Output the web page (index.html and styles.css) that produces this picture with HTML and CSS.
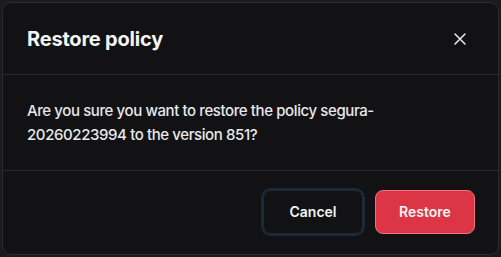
FILE: index.html
```html
<!DOCTYPE html>
<html>
<head>
<meta charset="utf-8">
<link rel="stylesheet" href="styles.css">
</head>
<body>
<div class="dialog">
  <div class="header">
    <h2 class="title">Restore policy</h2>
    <button class="close" aria-label="Close">
      <svg width="14" height="14" viewBox="0 0 14 14"><path d="M2 2L12 12M12 2L2 12" stroke="#e4e4e7" stroke-width="1.6" stroke-linecap="round"/></svg>
    </button>
  </div>
  <div class="body">
    <p class="text">Are you sure you want to restore the policy segura-20260223994 to the version 851?</p>
  </div>
  <div class="footer">
    <button class="btn cancel">Cancel</button>
    <button class="btn restore">Restore</button>
  </div>
</div>
</body>
</html>
```
FILE: styles.css
```css
html, body {
  margin: 0;
  padding: 0;
  background: #1b1b1e;
}
body {
  padding: 2px;
  font-family: Inter, "Noto Sans", sans-serif;
  color: #ececee;
}
.dialog {
  box-sizing: border-box;
  width: 497px;
  height: 253px;
  background: #121214;
  border: 1px solid #2c2c30;
  border-radius: 9px;
  display: flex;
  flex-direction: column;
}
.header {
  height: 72px;
  box-sizing: border-box;
  padding: 0 24px;
  display: flex;
  align-items: center;
  justify-content: space-between;
  border-bottom: 1px solid #2a2a2e;
}
.title {
  margin: 0;
  font-size: 20px;
  font-weight: 700;
  color: #f4f4f5;
  letter-spacing: -0.2px;
}
.close {
  background: none;
  border: 0;
  padding: 0;
  width: 20px;
  height: 20px;
  display: flex;
  align-items: center;
  justify-content: center;
  margin-right: 4px;
}
.body {
  height: 96px;
  box-sizing: border-box;
  padding: 24px 40px 24px 24px;
  border-bottom: 1px solid #2a2a2e;
}
.text {
  margin: 0;
  font-size: 15px;
  font-weight: 500;
  letter-spacing: -0.4px;
  line-height: 24px;
  color: #e8e8ea;
}
.footer {
  flex: 1;
  display: flex;
  justify-content: flex-end;
  align-items: center;
  gap: 12px;
  padding: 0 23px 2px;
}
.btn {
  font-family: Inter, "Noto Sans", sans-serif;
  font-size: 14px;
  font-weight: 600;
  height: 44px;
  width: 100px;
  border-radius: 8px;
  color: #f4f4f5;
}
.cancel {
  background: #121214;
  border: 1px solid #1f2a36;
  outline: 2px solid #1d2a3a;
}
.restore {
  background: #dc3545;
  border: 1px solid #f07080;
}
```
